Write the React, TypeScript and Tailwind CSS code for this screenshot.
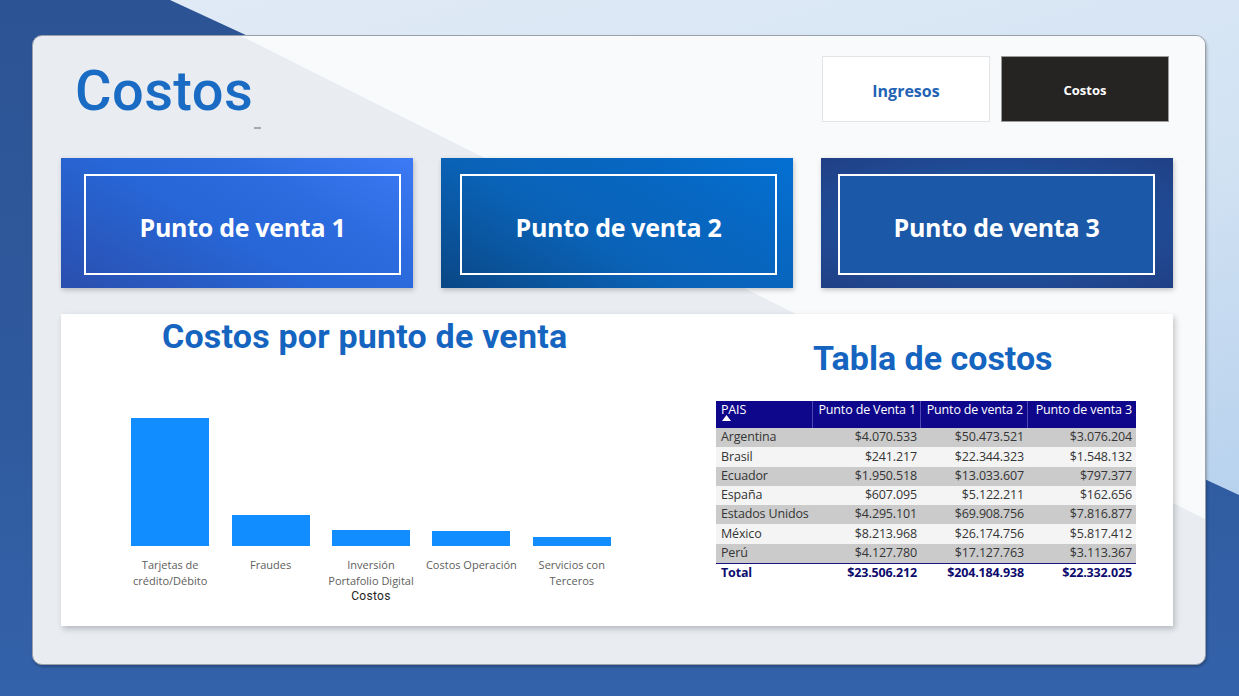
import React from "react";

const bars = [
  { label: ["Tarjetas de", "crédito/Débito"], h: 128 },
  { label: ["Fraudes"], h: 31 },
  { label: ["Inversión", "Portafolio Digital"], h: 16 },
  { label: ["Costos Operación"], h: 15 },
  { label: ["Servicios con", "Terceros"], h: 9 },
];

const rows = [
  ["Argentina", "$4.070.533", "$50.473.521", "$3.076.204"],
  ["Brasil", "$241.217", "$22.344.323", "$1.548.132"],
  ["Ecuador", "$1.950.518", "$13.033.607", "$797.377"],
  ["España", "$607.095", "$5.122.211", "$162.656"],
  ["Estados Unidos", "$4.295.101", "$69.908.756", "$7.816.877"],
  ["México", "$8.213.968", "$26.174.756", "$5.817.412"],
  ["Perú", "$4.127.780", "$17.127.763", "$3.113.367"],
];

const cards = [
  {
    label: "Punto de venta 1",
    outer: "bg-[linear-gradient(30deg,#2a4fae_0%,#2766d6_45%,#2d6ce0_70%,#3b7af4_100%)]",
    inner: "ml-[23px]",
  },
  {
    label: "Punto de venta 2",
    outer: "bg-[linear-gradient(30deg,#0a4785_0%,#0a62b6_40%,#0767c2_70%,#0470d2_100%)]",
    inner: "ml-[19px]",
  },
  {
    label: "Punto de venta 3",
    outer: "bg-[radial-gradient(ellipse_at_center,#1d56a3_30%,#213f85_100%)]",
    inner: "ml-[17px] bg-[#1b59a8]",
  },
];

const segoe = "font-['Open_Sans',sans-serif]";
const din = "font-['Roboto',sans-serif]";

export default function App() {
  return (
    <div className="relative w-[1239px] h-[696px] overflow-hidden bg-[linear-gradient(180deg,#2c5495_0%,#2f5a9e_60%,#3462aa_100%)]">
      {/* light diagonal backdrop */}
      <div className="absolute inset-0 bg-[linear-gradient(165deg,#e2ebf6_0%,#d3e3f3_45%,#a9c8ea_100%)] [clip-path:polygon(170px_0,100%_0,100%_495px)]" />

      <div className="relative pt-[35px] pl-[32px]">
        {/* main card */}
        <div className="relative w-[1174px] h-[630px] rounded-[10px] border border-[#9aa1ab] bg-[#e9edf2] shadow-[1px_2px_3px_rgba(0,0,0,0.25)] overflow-hidden">
          <div className="absolute inset-0 bg-[#f8fafc] [clip-path:polygon(208px_0,100%_0,100%_483px)]" />

          <div className="relative flex flex-col pl-[28px] pt-[20px]">
            {/* header */}
            <div className="flex h-[102px] w-[1112px]">
              <div className="relative flex-1">
                <h1 className={`${din} font-medium text-[56px] leading-none text-[#1a6bc3] ml-[14px] mt-[7px] tracking-[0.4px]`}>
                  Costos
                </h1>
                <span className="absolute left-[193px] top-[71px] w-[7px] h-[2px] bg-[#a5a9ae]" />
              </div>
              <div className="flex gap-[11px] mr-[4px]">
                <div className="w-[168px] h-[66px] pt-[4px] bg-white border border-[#e3e4e6] flex items-center justify-center">
                  <span className={`${segoe} font-bold text-[16px] text-[#2363b5]`}>Ingresos</span>
                </div>
                <div className="w-[168px] h-[66px] pt-[3px] bg-[#252423] border border-[#9b9b9b] flex items-center justify-center">
                  <span className={`${segoe} font-bold text-[13px] text-white`}>Costos</span>
                </div>
              </div>
            </div>

            {/* punto de venta cards */}
            <div className="flex gap-[28px]">
              {cards.map((c) => (
                <div
                  key={c.label}
                  className={`w-[352px] h-[130px] pt-[16px] shadow-[1px_2px_5px_rgba(0,0,0,0.22)] ${c.outer}`}
                >
                  <div className={`w-[317px] h-[101px] pt-[6px] border-2 border-white flex items-center justify-center ${c.inner}`}>
                    <span className={`${segoe} font-bold text-[25px] text-white tracking-[-0.3px]`}>
                      {c.label}
                    </span>
                  </div>
                </div>
              ))}
            </div>

            {/* chart + table panel */}
            <div className="mt-[26px] w-[1112px] h-[312px] bg-white shadow-[2px_3px_6px_rgba(0,0,0,0.22)] flex">
              <div className="w-[620px] flex flex-col">
                <h2 className={`${din} font-bold text-[34px] leading-none text-[#1565c0] ml-[101px] mt-[5px] tracking-[0.2px]`}>
                  Costos por punto de venta
                </h2>
                <div className="ml-[59px] mt-[65px] w-[502px] grid grid-cols-5 items-end h-[128px]">
                  {bars.map((b) => (
                    <div key={b.label[0]} className="flex justify-center">
                      <div className="w-[78px] bg-[#118dff]" style={{ height: b.h }} />
                    </div>
                  ))}
                </div>
                <div className="ml-[59px] mt-[11px] w-[502px] grid grid-cols-5">
                  {bars.map((b) => (
                    <div key={b.label[0]} className={`${segoe} text-[11px] leading-[16px] text-[#605e5c] text-center whitespace-nowrap`}>
                      {b.label.map((l) => (
                        <div key={l}>{l}</div>
                      ))}
                    </div>
                  ))}
                </div>
                <div className={`${din} ml-[59px] w-[502px] text-center text-[12px] leading-[14px] text-[#252423] tracking-[0.3px]`}>
                  Costos
                </div>
              </div>

              <div className="flex flex-col">
                <h2 className={`${din} font-bold text-[34px] leading-none text-[#1565c0] ml-[132px] mt-[27px] tracking-[0px]`}>
                  Tabla de costos
                </h2>
                <div className={`${segoe} ml-[35px] mt-[26px] w-[420px] text-[12.5px] tracking-[-0.15px]`}>
                  <div className="flex h-[27px] bg-[#0f078b] text-white">
                    <div className="w-[97px] pl-[5px] leading-[18px] border-r border-[#4c48b2]">
                      PAIS
                      <svg width="9" height="6" viewBox="0 0 9 6" className="-mt-[4px] ml-[1px]">
                        <path d="M0 6 L4.5 0 L9 6 Z" fill="white" />
                      </svg>
                    </div>
                    <div className="w-[108px] pr-[4px] text-right leading-[18px] border-r border-[#4c48b2] whitespace-nowrap">Punto de Venta 1</div>
                    <div className="w-[107px] pr-[4px] text-right leading-[18px] border-r border-[#4c48b2] whitespace-nowrap">Punto de venta 2</div>
                    <div className="w-[108px] pr-[4px] text-right leading-[18px] whitespace-nowrap">Punto de venta 3</div>
                  </div>
                  {rows.map((r, i) => (
                    <div
                      key={r[0]}
                      className={`flex h-[19.3px] items-center text-[#353535] ${i % 2 === 0 ? "bg-[#cbcbcb]" : "bg-[#f4f4f4]"}`}
                    >
                      <div className="w-[97px] pl-[5px] whitespace-nowrap">{r[0]}</div>
                      <div className="w-[108px] pr-[4px] text-right">{r[1]}</div>
                      <div className="w-[107px] pr-[4px] text-right">{r[2]}</div>
                      <div className="w-[108px] pr-[4px] text-right">{r[3]}</div>
                    </div>
                  ))}
                  <div className="flex h-[20px] items-center border-t border-[#1a1580] font-bold text-[#0d0b6e]">
                    <div className="w-[97px] pl-[5px]">Total</div>
                    <div className="w-[108px] pr-[4px] text-right">$23.506.212</div>
                    <div className="w-[107px] pr-[4px] text-right">$204.184.938</div>
                    <div className="w-[108px] pr-[4px] text-right">$22.332.025</div>
                  </div>
                </div>
              </div>
            </div>
          </div>
        </div>
      </div>
    </div>
  );
}
